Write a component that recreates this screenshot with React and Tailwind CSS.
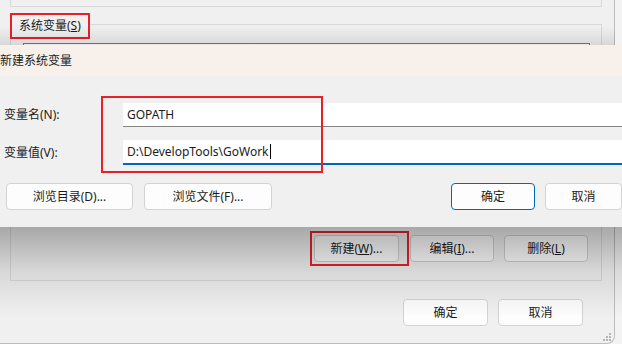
import React from "react";

const font = "font-['Noto_Sans','Noto_Sans_CJK_SC',sans-serif]";

function Btn({ children, className = "" }) {
  return (
    <div
      className={`flex h-[27px] items-center justify-center rounded-[4px] border bg-[#fdfdfd] text-[12px] text-[#1b1b1b] ${className}`}
    >
      {children}
    </div>
  );
}

export default function App() {
  return (
    <div className={`relative h-[344px] w-[622px] overflow-hidden bg-[#f3f3f3] ${font}`}>
      {/* ===== background window: 环境变量 ===== */}
      <div className="relative h-[344px] w-[615px] rounded-br-[8px] border-r border-b border-[#bdbdbd] bg-[#f0f0f0]">
        {/* 用户变量 groupbox (bottom edge) */}
        <div className="ml-[10px] h-[7px] w-[592px] border-x border-b border-[#d9d9d9]" />

        {/* 系统变量 groupbox */}
        <div className="relative ml-[10px] mt-[17px] h-[257px] w-[592px] border border-[#d9d9d9]">
          <div className="absolute -top-[12px] -left-[1px] flex h-[26px] w-[80px] items-center border-2 border-[#e8202a] bg-[#f0f0f0] pl-[7px] text-[12px] text-[#1b1b1b]">
            系统变量(<span className="underline">S</span>)
          </div>

          {/* list */}
          <div className="ml-[12px] mt-[18px] h-[180px] w-[567px] border border-[#7a7a7a] bg-white" />

          {/* 新建 / 编辑 / 删除 */}
          <div className="mt-[12px] flex justify-end gap-[10px] pr-[13px]">
            <div className="relative">
              <Btn className="w-[85px] border-[#cfcfcf]">
                新建(<span className="underline">W</span>)...
              </Btn>
              <div className="absolute -top-[4px] -left-[4px] h-[35px] w-[99px] border-2 border-[#e8202a]" />
            </div>
            <Btn className="ml-[1px] w-[84px] border-[#cfcfcf]">
              编辑(<span className="underline">I</span>)...
            </Btn>
            <Btn className="w-[84px] border-[#cfcfcf]">
              删除(<span className="underline">L</span>)
            </Btn>
          </div>
        </div>

        {/* 确定 / 取消 */}
        <div className="mt-[18px] flex justify-end gap-[10px] pr-[31px]">
          <Btn className="w-[85px] border-[#d3d3d3]">确定</Btn>
          <Btn className="w-[85px] border-[#d3d3d3]">取消</Btn>
        </div>

        {/* resize grip */}
        <div className="absolute right-[3px] bottom-[2px] grid grid-cols-3 gap-[1px]">
          {[0, 0, 1, 0, 1, 1, 1, 1, 1].map((v, i) => (
            <span
              key={i}
              className={`h-[2px] w-[2px] ${v ? "bg-[#b5b5b5]" : "bg-transparent"}`}
            />
          ))}
        </div>
      </div>

      {/* shadow above the dialog */}
      <div className="absolute top-[26px] left-0 h-[19px] w-[615px] bg-gradient-to-b from-transparent to-black/10" />

      {/* shadow below the dialog */}
      <div className="absolute top-[227px] left-0 h-[90px] w-[622px] bg-gradient-to-b from-black/30 via-black/10 to-transparent" />

      {/* ===== dialog: 新建系统变量 ===== */}
      <div className="absolute top-[45px] left-0 h-[182px] w-[640px] bg-[#f0f0f0]">
        <div className="flex h-[31px] items-center bg-[#f8f1eb] text-[12px] text-[#1b1b1b]">
          新建系统变量
        </div>

        <div className="pt-[27px]">
          <div className="flex h-[24px] items-center">
            <div className="w-[123px] pl-[4px] text-[12px] text-[#1b1b1b]">变量名(N):</div>
            <div className="flex h-[24px] flex-1 items-center border-b border-[#868686] bg-white pl-[4px] text-[12px] text-[#1b1b1b]">
              GOPATH
            </div>
          </div>

          <div className="mt-[13px] flex h-[25px] items-center">
            <div className="w-[123px] pl-[4px] text-[12px] text-[#1b1b1b]">变量值(V):</div>
            <div className="flex h-[25px] flex-1 items-center border-b-2 border-[#0067c0] bg-white pl-[4px] text-[12px] text-[#1b1b1b]">
              D:\DevelopTools\GoWork
              <span className="ml-[1px] h-[15px] w-[1px] bg-black" />
            </div>
          </div>

          <div className="mt-[18px] flex gap-[11px] pl-[6px]">
            <Btn className="w-[127px] border-[#d3d3d3]">浏览目录(D)...</Btn>
            <Btn className="w-[128px] border-[#d3d3d3]">浏览文件(F)...</Btn>
            <Btn className="ml-[168px] w-[84px] border-[#0067c0]">确定</Btn>
            <Btn className="ml-[-1px] w-[77px] border-[#d3d3d3]">取消</Btn>
          </div>
        </div>

        {/* red highlight around the inputs */}
        <div className="absolute top-[51px] left-[101px] h-[77px] w-[222px] border-2 border-[#e8202a]" />
      </div>
    </div>
  );
}
